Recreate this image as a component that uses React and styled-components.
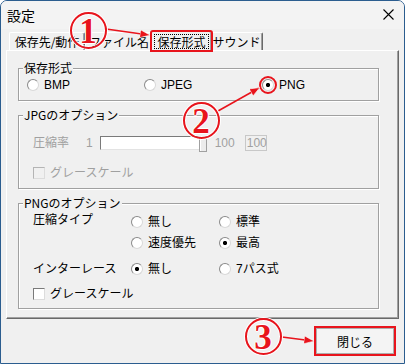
import React from "react";
import styled, { createGlobalStyle } from "styled-components";

const GlobalStyle = createGlobalStyle`
  html, body {
    margin: 0;
    padding: 0;
    background: #ffffff;
  }
  body {
    font-family: "Liberation Sans", "Noto Sans CJK JP", sans-serif;
    font-size: 12px;
    color: #000;
  }
  * {
    box-sizing: border-box;
  }
`;

const RED = "#e8141c";

const tabs = [
  { label: "保存先/動作", width: 76 },
  { label: "ファイル名", width: 68 },
  { label: "保存形式", width: 57, active: true },
  { label: "サウンド", width: 53 },
];

export default function App() {
  return (
    <>
      <GlobalStyle />
      <Window>
        <TitleBar>
          <Title>設定</Title>
          <CloseIcon width="11" height="11" viewBox="0 0 11 11">
            <path d="M0.5 0.5 L10.5 10.5 M10.5 0.5 L0.5 10.5" stroke="#000" strokeWidth="1.1" />
          </CloseIcon>
        </TitleBar>

        <Body>
          <TabStrip>
            {tabs.map(({ label, width, active }) => (
              <Tab key={label} $width={width} $active={active}>
                {active ? <Focus>{label}</Focus> : label}
              </Tab>
            ))}
          </TabStrip>

          <Panel>
            <Group $h={33}>
              <Legend>保存形式</Legend>
              <FormatRow>
                <Option>
                  <Radio />
                  BMP
                </Option>
                <Option>
                  <Radio />
                  JPEG
                </Option>
                <Option>
                  <Radio checked $highlight />
                  PNG
                </Option>
              </FormatRow>
            </Group>

            <Group $h={74} $gap={14}>
              <Legend>JPGのオプション</Legend>
              <SliderRow>
                <Muted style={{ width: 53 }}>圧縮率</Muted>
                <Muted>1</Muted>
                <Slider>
                  <Track />
                  <Thumb />
                </Slider>
                <Muted>100</Muted>
                <Edit>100</Edit>
              </SliderRow>
              <CheckRow $top={15}>
                <Checkbox $disabled />
                <Muted>グレースケール</Muted>
              </CheckRow>
            </Group>

            <Group $h={106} $gap={14}>
              <Legend>PNGのオプション</Legend>
              <OptionGrid>
                <GridLabel>圧縮タイプ</GridLabel>
                <Option>
                  <Radio />
                  無し
                </Option>
                <Option>
                  <Radio />
                  標準
                </Option>
                <span />
                <Option>
                  <Radio />
                  速度優先
                </Option>
                <Option>
                  <Radio checked />
                  最高
                </Option>
                <GridLabel $spaced>インターレース</GridLabel>
                <Option $spaced>
                  <Radio checked />
                  無し
                </Option>
                <Option $spaced>
                  <Radio />
                  7パス式
                </Option>
              </OptionGrid>
              <CheckRow $top={11}>
                <Checkbox />
                <span>グレースケール</span>
              </CheckRow>
            </Group>
          </Panel>

          <Footer>
            <Button>閉じる</Button>
          </Footer>
        </Body>

        {/* red annotations laid over the dialog */}
        <Arrows width="405" height="364" viewBox="0 0 405 364">
          <defs>
            <marker id="head" markerWidth="10" markerHeight="8" refX="9" refY="4" orient="auto" markerUnits="userSpaceOnUse">
              <path d="M0 0 L10 4 L0 8 Z" fill={RED} stroke="#fff" strokeWidth="0.6" />
            </marker>
          </defs>
          <line x1="106" y1="29" x2="149" y2="35" stroke={RED} strokeWidth="1.6" markerEnd="url(#head)" />
          <line x1="218" y1="111" x2="259" y2="88" stroke={RED} strokeWidth="1.6" markerEnd="url(#head)" />
          <line x1="282" y1="337" x2="313" y2="341" stroke={RED} strokeWidth="1.6" markerEnd="url(#head)" />
        </Arrows>
        <Marker $x={88} $y={30}>1</Marker>
        <Marker $x={201} $y={120}>2</Marker>
        <Marker $x={263} $y={336}>3</Marker>
      </Window>
    </>
  );
}

const Window = styled.div`
  position: relative;
  width: 405px;
  height: 364px;
  background: #f0f0f0;
  border: 1px solid #2b5d8f;
  border-radius: 7px 7px 0 0;
  overflow: hidden;
  display: flex;
  flex-direction: column;
`;

const TitleBar = styled.div`
  height: 28px;
  flex-shrink: 0;
  display: flex;
  align-items: center;
  justify-content: space-between;
  padding: 0 10px 0 6px;
  background: #f3f3f3;
`;

const Title = styled.span`
  font-family: "Noto Sans CJK JP", sans-serif;
  font-size: 14px;
  line-height: 16px;
`;

const CloseIcon = styled.svg`
  display: block;
  margin-top: -1px;
`;

const Body = styled.div`
  display: flex;
  flex-direction: column;
  padding: 1px 5px 0 5px;
`;

const TabStrip = styled.div`
  height: 20px;
  display: flex;
  align-items: flex-end;
  padding-left: 3px;
`;

const Tab = styled.div`
  position: relative;
  width: ${({ $width, $active }) => ($active ? $width + 4 : $width)}px;
  height: ${({ $active }) => ($active ? 20 : 18)}px;
  margin: ${({ $active }) => ($active ? "0 -2px -1px" : "0")};
  z-index: ${({ $active }) => ($active ? 2 : 1)};
  display: flex;
  align-items: center;
  justify-content: center;
  background: #f0f0f0;
  border-top: 1px solid #fff;
  border-left: 1px solid #fff;
  border-right: 1px solid #696969;
  border-radius: 2px 2px 0 0;
  box-shadow: inset -1px 0 #a0a0a0;
  font-family: "Noto Sans CJK JP", sans-serif;
  font-size: 12px;
  line-height: 14px;
  white-space: nowrap;
  outline: ${({ $active }) => ($active ? `2px solid ${RED}` : "none")};
  outline-offset: -1px;
`;

const Focus = styled.span`
  padding: 0 2px;
  border: 1px dotted #000;
  line-height: 13px;
`;

const Panel = styled.div`
  height: 269px;
  display: flex;
  flex-direction: column;
  padding: 17px 19px 0 11px;
  border-top: 1px solid #fff;
  border-left: 1px solid #fff;
  border-right: 1px solid #696969;
  border-bottom: 1px solid #696969;
  box-shadow: inset -1px -1px #a0a0a0;
`;

const Group = styled.div`
  height: ${({ $h }) => $h}px;
  margin-top: ${({ $gap }) => $gap || 0}px;
  display: flex;
  flex-direction: column;
  border: 1px solid #a0a0a0;
  box-shadow: inset 1px 1px #fff, 1px 1px #fff;
  padding-left: 14px;
`;

const Legend = styled.span`
  align-self: flex-start;
  margin: -8px 0 0 -10px;
  padding: 0 1px;
  height: 14px;
  line-height: 14px;
  background: #f0f0f0;
  font-family: "Noto Sans CJK JP", sans-serif;
  white-space: nowrap;
`;

const FormatRow = styled.div`
  display: grid;
  grid-template-columns: 117px 118px auto;
  margin: 3px 0 0 -6px;
`;

const Option = styled.label`
  display: flex;
  align-items: center;
  gap: 5px;
  height: 14px;
  line-height: 14px;
  white-space: nowrap;
  margin-top: ${({ $spaced }) => ($spaced ? 5 : 0)}px;
`;

const Radio = styled.span`
  position: relative;
  flex-shrink: 0;
  width: 12px;
  height: 12px;
  border-radius: 50%;
  border: 1px solid #8a8a8a;
  border-right-color: #d8d8d8;
  border-bottom-color: #d8d8d8;
  background: ${({ checked }) =>
    checked ? "radial-gradient(circle, #000 0 1.8px, #fff 2.4px)" : "#fff"};
  outline: ${({ $highlight }) => ($highlight ? `2px solid ${RED}` : "none")};
  outline-offset: 1px;
`;

const SliderRow = styled.div`
  display: flex;
  align-items: center;
  height: 16px;
  margin-top: 13px;
`;

const Muted = styled.span`
  color: #a0a0a0;
  white-space: nowrap;
  line-height: 14px;
`;

const Slider = styled.div`
  display: flex;
  align-items: center;
  margin: 0 8px 0 7px;
`;

const Track = styled.div`
  width: 103px;
  height: 14px;
  background: #fff;
  border-top: 1px solid #7a7a7a;
  border-left: 1px solid #7a7a7a;
  border-bottom: 1px solid #e3e3e3;
  border-right: 1px solid #e3e3e3;
`;

const Thumb = styled.div`
  width: 8px;
  height: 16px;
  margin: 2px 0 0 -4px;
  background: #ececec;
  border: 1px solid #a0a0a0;
  box-shadow: inset 1px 1px #fff;
`;

const Edit = styled.span`
  width: 22px;
  height: 16px;
  margin-left: 10px;
  padding-left: 1px;
  line-height: 14px;
  color: #a0a0a0;
  border: 1px solid #c8c8c8;
`;

const CheckRow = styled.label`
  display: flex;
  align-items: center;
  gap: 5px;
  height: 14px;
  line-height: 14px;
  margin-top: ${({ $top }) => $top}px;
`;

const Checkbox = styled.span`
  width: 12px;
  height: 12px;
  background: ${({ $disabled }) => ($disabled ? "#f0f0f0" : "#fff")};
  border: 1px solid ${({ $disabled }) => ($disabled ? "#b4b4b4" : "#7a7a7a")};
  border-right-color: #dcdcdc;
  border-bottom-color: #dcdcdc;
`;

const OptionGrid = styled.div`
  display: grid;
  grid-template-columns: 98px 88px auto;
  margin-top: 5px;
  row-gap: 7px;
`;

const GridLabel = styled.span`
  line-height: 14px;
  white-space: nowrap;
  margin-top: ${({ $spaced }) => ($spaced ? 5 : -2)}px;
`;

const Footer = styled.div`
  display: flex;
  justify-content: flex-end;
  padding: 9px 5px 0 0;
`;

const Button = styled.button`
  width: 78px;
  height: 26px;
  padding: 0;
  font-family: "Noto Sans CJK JP", sans-serif;
  font-size: 12px;
  color: #000;
  background: #f4f4f4;
  border: 1px solid #adadad;
  outline: 2px solid ${RED};
  outline-offset: 0;
`;

const Arrows = styled.svg`
  position: absolute;
  left: -1px;
  top: -1px;
  pointer-events: none;
  z-index: 5;
`;

const Marker = styled.div`
  position: absolute;
  left: ${({ $x }) => $x - 19.5}px;
  top: ${({ $y }) => $y - 19.5}px;
  width: 37px;
  height: 37px;
  z-index: 6;
  display: flex;
  align-items: center;
  justify-content: center;
  border: 2px solid ${RED};
  border-radius: 50%;
  box-shadow: 0 0 0 1px #fff, inset 0 0 0 1px #fff;
  font-family: "Liberation Serif", serif;
  font-weight: 700;
  font-size: 35px;
  line-height: 1;
  color: ${RED};
  text-shadow: 1px 0 #fff, -1px 0 #fff, 0 1px #fff, 0 -1px #fff;
  padding-top: 3px;
`;
